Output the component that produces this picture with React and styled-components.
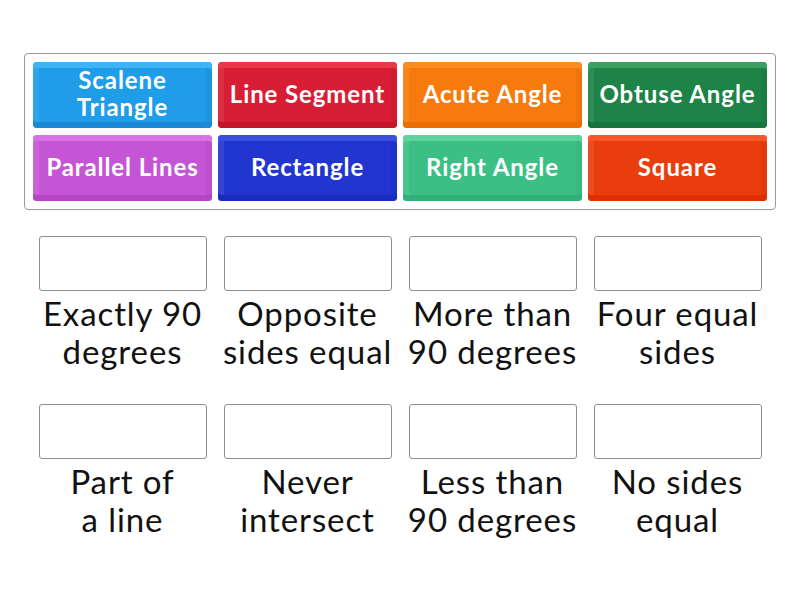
import React from 'react';
import styled, { createGlobalStyle } from 'styled-components';

const Global = createGlobalStyle`
  body {
    margin: 0;
    background: #fff;
    font-family: Lato, "Open Sans", sans-serif;
  }
`;

const Page = styled.div`
  width: 800px;
  height: 600px;
  padding-top: 53px;
  box-sizing: border-box;
`;

const Bank = styled.div`
  width: 752px;
  margin: 0 0 0 24px;
  box-sizing: border-box;
  border: 1px solid #9a9a9a;
  border-radius: 4px;
  padding: 8px;
  display: grid;
  grid-template-columns: repeat(4, 179px);
  grid-auto-rows: 66px;
  column-gap: 6px;
  row-gap: 7px;
`;

const Tile = styled.div`
  display: flex;
  align-items: center;
  justify-content: center;
  padding-bottom: 4px;
  box-sizing: border-box;
  text-align: center;
  color: #fff;
  font-size: 24px;
  font-weight: 700;
  letter-spacing: 0.9px;
  line-height: 27px;
  border-radius: 4px;
  background: ${p => p.bg};
  box-shadow:
    inset 0 6px 0 ${p => p.hi},
    inset 0 -6px 0 ${p => p.lo},
    inset 6px 0 0 rgba(255, 255, 255, 0.08),
    inset -6px 0 0 rgba(0, 0, 0, 0.04);
`;

const Targets = styled.div`
  margin: 26px 0 0 30px;
  display: grid;
  grid-template-columns: repeat(4, 185px);
  row-gap: 34px;
`;

const Slot = styled.div`
  display: flex;
  flex-direction: column;
  align-items: center;
`;

const Box = styled.div`
  width: 168px;
  height: 55px;
  box-sizing: border-box;
  border: 1px solid #8f8f8f;
  border-radius: 3px;
`;

const Label = styled.div`
  margin-top: 3px;
  font-size: 33px;
  letter-spacing: 0.9px;
  line-height: 38px;
  color: #111;
  text-align: center;
  white-space: nowrap;
`;

const tiles = [
  { text: 'Scalene Triangle', bg: '#1f9de8', hi: '#3cb4f6', lo: '#1a8ad6' },
  { text: 'Line Segment', bg: '#d81e34', hi: '#e9384a', lo: '#c4152a' },
  { text: 'Acute Angle', bg: '#f67a0c', hi: '#fb8c22', lo: '#ec6c04' },
  { text: 'Obtuse Angle', bg: '#1e8346', hi: '#3aa061', lo: '#18753d' },
  { text: 'Parallel Lines', bg: '#c455d4', hi: '#d774e4', lo: '#b646c6' },
  { text: 'Rectangle', bg: '#2236cf', hi: '#3a4ee0', lo: '#1a2cbd' },
  { text: 'Right Angle', bg: '#3cbf85', hi: '#5cd39b', lo: '#31b078' },
  { text: 'Square', bg: '#ea3d0d', hi: '#f8562a', lo: '#de3000' },
];

const targets = [
  ['Exactly 90', 'degrees'],
  ['Opposite', 'sides equal'],
  ['More than', '90 degrees'],
  ['Four equal', 'sides'],
  ['Part of', 'a line'],
  ['Never', 'intersect'],
  ['Less than', '90 degrees'],
  ['No sides', 'equal'],
];

export default function App() {
  return (
    <Page>
      <Global />
      <Bank>
        {tiles.map(t => (
          <Tile key={t.text} bg={t.bg} hi={t.hi} lo={t.lo}>
            {t.text === 'Scalene Triangle' ? (
              <span>Scalene<br />Triangle</span>
            ) : (
              t.text
            )}
          </Tile>
        ))}
      </Bank>
      <Targets>
        {targets.map(([a, b]) => (
          <Slot key={a + b}>
            <Box />
            <Label>
              {a}
              <br />
              {b}
            </Label>
          </Slot>
        ))}
      </Targets>
    </Page>
  );
}
